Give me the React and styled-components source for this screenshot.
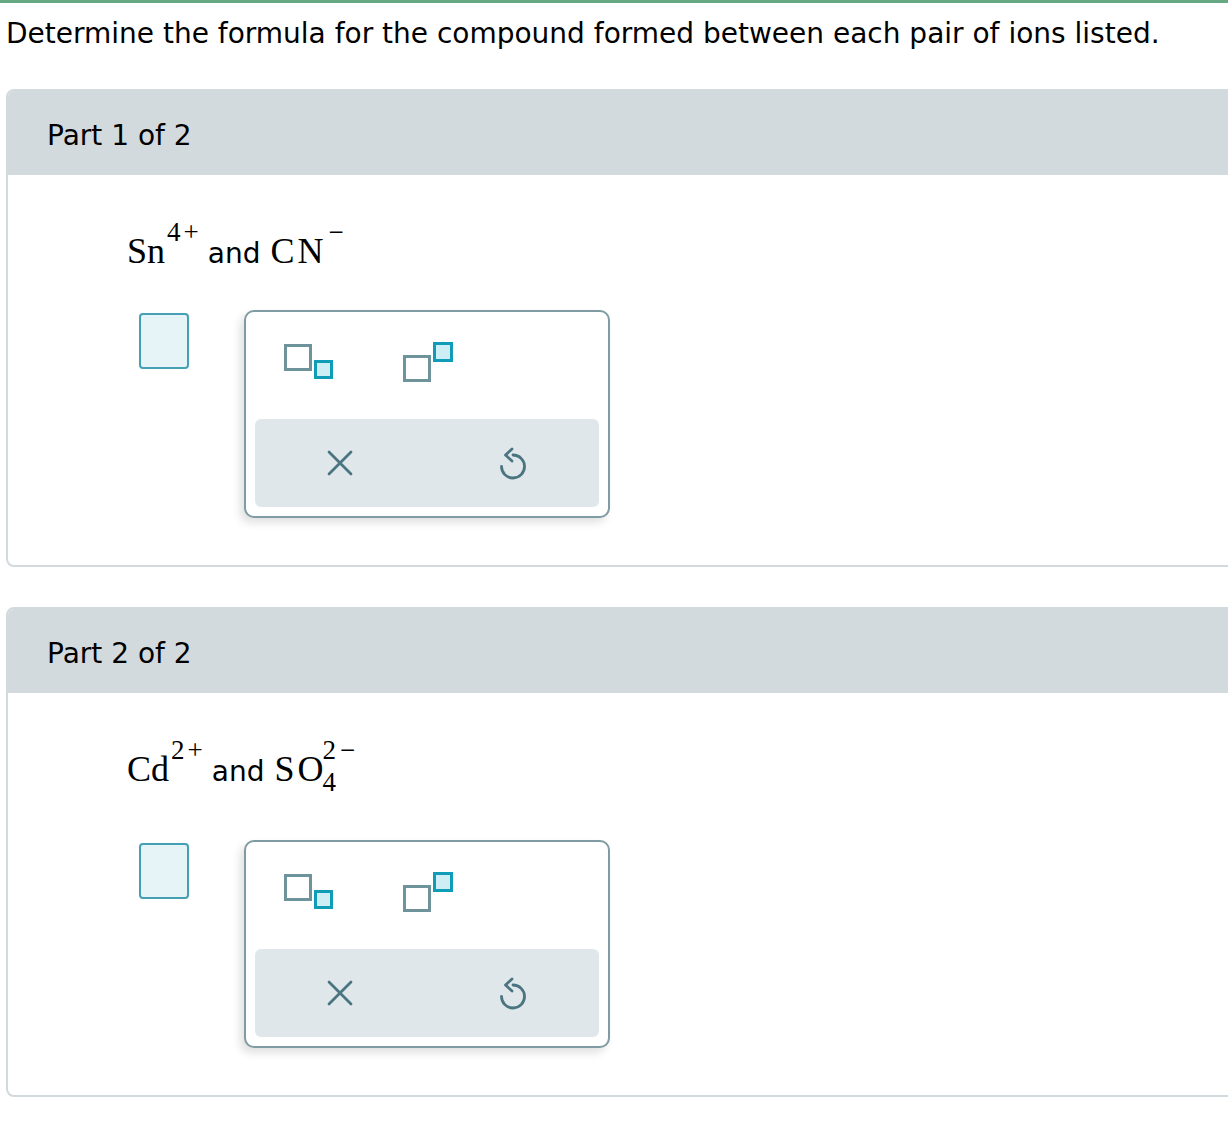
import React from 'react'
import styled, { createGlobalStyle } from 'styled-components'

const GlobalStyle = createGlobalStyle`
  html, body {
    margin: 0;
    padding: 0;
    overflow-x: hidden;
    background: #fff;
  }
  body {
    font-family: "DejaVu Sans", Verdana, sans-serif;
    color: #000;
  }
`

const TopBar = styled.div`
  height: 3px;
  background-color: #65a883;
`

const Prompt = styled.h1`
  margin: 0 0 38px 0;
  padding: 14px 6px 0 6px;
  font-size: 28px;
  line-height: 34px;
  font-weight: normal;
  white-space: nowrap;
`

const Card = styled.section`
  margin: 0 -30px ${p => p.$last ? '0' : '40px'} 6px;
  border: 2px solid #d2dadd;
  border-radius: 8px;
  overflow: hidden;
`

const CardHeader = styled.div`
  height: 84px;
  box-sizing: border-box;
  background-color: #d2dadd;
  display: flex;
  align-items: center;
  padding: 4px 0 0 39px;
  font-size: 28px;
`

const CardBody = styled.div`
  padding: 54px 0 47px 119px;
`

const Formula = styled.div`
  height: ${p => p.$tall ? 56 : 44}px;
  line-height: 44px;
  font-family: "Liberation Serif", "Times New Roman", serif;
  font-size: 36px;
  white-space: nowrap;
`

const Word = styled.span`
  font-family: "DejaVu Sans", Verdana, sans-serif;
  font-size: 28px;
  margin: 0 ${p => p.$right}px 0 ${p => p.$left}px;
`

const Sup = styled.span`
  font-size: 27px;
  line-height: 0;
  vertical-align: 22px;
  margin-left: 2px;
  letter-spacing: 3px;
`

const Letters = styled.span`
  letter-spacing: 3px;
`

const Stack = styled.span`
  display: inline-block;
  font-size: 27px;
  vertical-align: -10px;
  margin-left: -4px;
`

const StackLine = styled.span`
  display: block;
  line-height: ${p => p.$lh}px;
  letter-spacing: 4px;
`

const AnswerRow = styled.div`
  margin-top: 37px;
  display: flex;
  align-items: flex-start;
`

const AnswerBox = styled.div`
  margin: 3px 0 0 12px;
  width: 50px;
  height: 56px;
  box-sizing: border-box;
  border: 2px solid #45a0b3;
  border-radius: 4px;
  background-color: #e6f4f8;
`

const Palette = styled.div`
  margin-left: 55px;
  width: 366px;
  height: 208px;
  box-sizing: border-box;
  border: 2px solid #7f9ba3;
  border-radius: 10px;
  padding: 0 9px 9px 9px;
  box-shadow: -4px 5px 8px rgba(0, 0, 0, 0.12);
  background: #fff;
  display: flex;
  flex-direction: column;
`

const IconRow = styled.div`
  height: 107px;
  display: flex;
  align-items: flex-start;
  padding-top: 25px;
  box-sizing: border-box;
`

const IconButton = styled.div`
  width: 60px;
  height: 50px;
  display: flex;
  align-items: center;
  justify-content: center;
  margin-left: ${p => p.$gap}px;
`

const ActionBar = styled.div`
  flex: 1;
  background-color: #e0e7ea;
  border-radius: 6px;
  display: flex;
`

const Action = styled.div`
  flex: 1;
  display: flex;
  align-items: center;
  justify-content: center;
`

const SubscriptIcon = () => (
  <svg width="50" height="36" viewBox="0 0 50 36">
    <rect x="1.5" y="1.5" width="25" height="24" fill="#fff" stroke="#6f939b" strokeWidth="3" />
    <rect x="31.5" y="17.5" width="16" height="16" fill="#cdeef4" stroke="#0e9cb6" strokeWidth="3" />
  </svg>
)

const SuperscriptIcon = () => (
  <svg width="50" height="41" viewBox="0 0 50 41">
    <rect x="1.5" y="14.5" width="25" height="24" fill="#fff" stroke="#6f939b" strokeWidth="3" />
    <rect x="31.5" y="1.5" width="17" height="17" fill="#cdeef4" stroke="#0e9cb6" strokeWidth="3" />
  </svg>
)

const ClearIcon = () => (
  <svg width="26" height="26" viewBox="0 0 26 26" style={{ marginRight: 2 }}>
    <path d="M2 2 L24 24 M24 2 L2 24" stroke="#4a7580" strokeWidth="2.8" strokeLinecap="round" />
  </svg>
)

const UndoIcon = () => (
  <svg width="32" height="36" viewBox="0 0 32 36">
    <path d="M16 10 A11.5 11.5 0 1 1 4.5 21.5" fill="none" stroke="#4a7580" strokeWidth="2.8" strokeLinecap="round" />
    <path d="M15 4 L8.5 10 L15 16" fill="none" stroke="#4a7580" strokeWidth="2.8" strokeLinecap="round" strokeLinejoin="round" />
  </svg>
)

function Part(props) {
  return (
    <Card $last={props.last}>
      <CardHeader>Part {props.n} of 2</CardHeader>
      <CardBody>
        <Formula $tall={props.tall}>{props.formula}</Formula>
        <AnswerRow>
          <AnswerBox />
          <Palette>
            <IconRow>
              <IconButton $gap={24}><SubscriptIcon /></IconButton>
              <IconButton $gap={59}><SuperscriptIcon /></IconButton>
            </IconRow>
            <ActionBar>
              <Action><ClearIcon /></Action>
              <Action><UndoIcon /></Action>
            </ActionBar>
          </Palette>
        </AnswerRow>
      </CardBody>
    </Card>
  )
}

export default function App() {
  return (
    <>
      <GlobalStyle />
      <TopBar />
      <Prompt>Determine the formula for the compound formed between each pair of ions listed.</Prompt>
      <Part
        n={1}
        formula={
          <>
            Sn<Sup>4+</Sup>
            <Word $left={6} $right={10}>and</Word>
            <Letters>CN</Letters><Sup>−</Sup>
          </>
        }
      />
      <Part
        n={2}
        last
        tall
        formula={
          <>
            Cd<Sup>2+</Sup>
            <Word $left={6} $right={10}>and</Word>
            <Letters>SO</Letters>
            <Stack>
              <StackLine $lh={4}>2−</StackLine>
              <StackLine $lh={60}>4</StackLine>
            </Stack>
          </>
        }
      />
    </>
  )
}
